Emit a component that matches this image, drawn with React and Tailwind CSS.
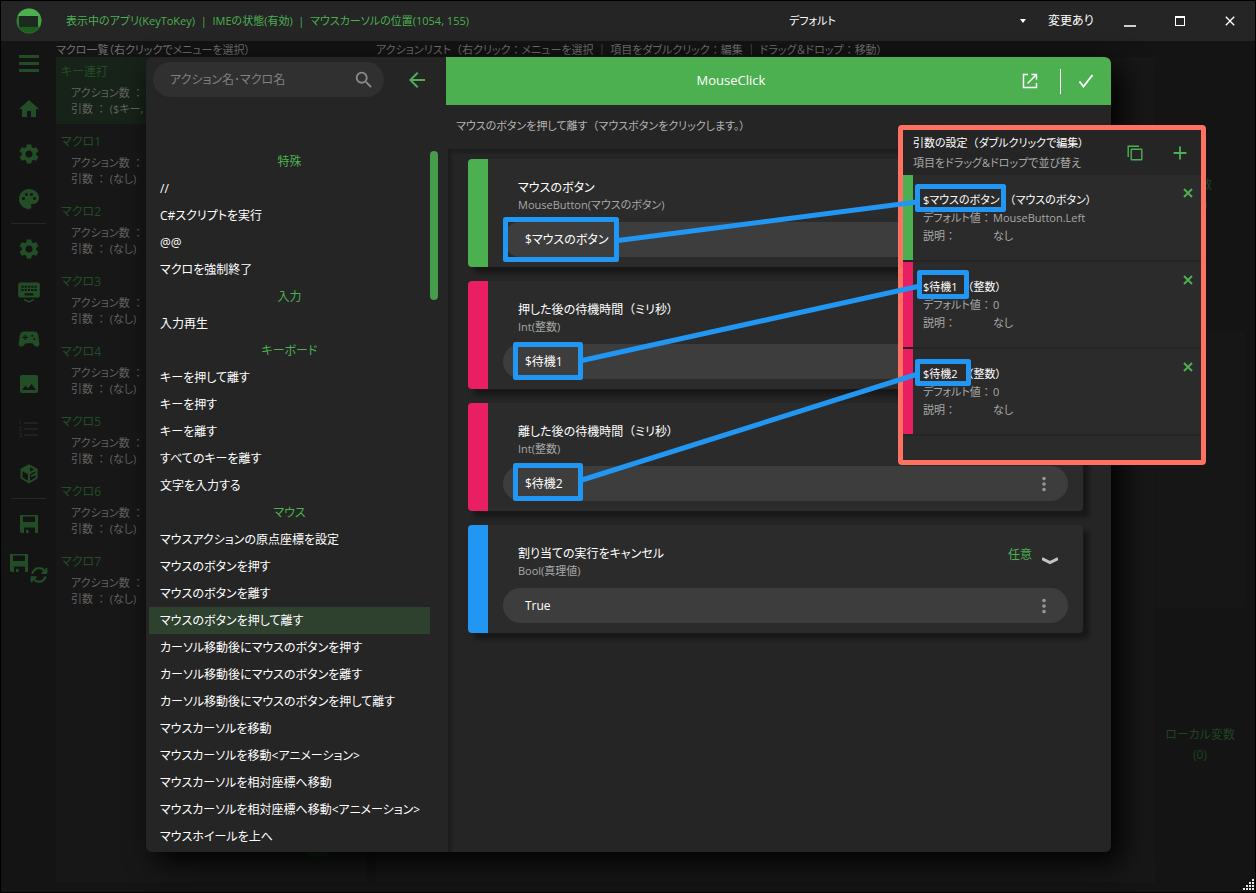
import { FaArrowsRotate } from "react-icons/fa6";
import {
  MdAdd,
  MdArrowBack,
  MdClose,
  MdFormatListNumbered,
  MdHome,
  MdImage,
  MdKeyboard,
  MdMoreVert,
  MdPalette,
  MdSearch,
  MdSettings,
  MdSportsEsports,
} from "react-icons/md";

const macros = [
  { name: "キー連打", args: "($キー,", selected: true },
  { name: "マクロ1", args: "(なし)" },
  { name: "マクロ2", args: "(なし)" },
  { name: "マクロ3", args: "(なし)" },
  { name: "マクロ4", args: "(なし)" },
  { name: "マクロ5", args: "(なし)" },
  { name: "マクロ6", args: "(なし)" },
  { name: "マクロ7", args: "(なし)" },
];

const actionGroups = [
  {
    title: "特殊",
    actions: ["//", "C#スクリプトを実行", "@@", "マクロを強制終了"],
  },
  { title: "入力", actions: ["入力再生"] },
  {
    title: "キーボード",
    actions: [
      "キーを押して離す",
      "キーを押す",
      "キーを離す",
      "すべてのキーを離す",
      "文字を入力する",
    ],
  },
  {
    title: "マウス",
    actions: [
      "マウスアクションの原点座標を設定",
      "マウスのボタンを押す",
      "マウスのボタンを離す",
      "マウスのボタンを押して離す",
      "カーソル移動後にマウスのボタンを押す",
      "カーソル移動後にマウスのボタンを離す",
      "カーソル移動後にマウスのボタンを押して離す",
      "マウスカーソルを移動",
      "マウスカーソルを移動<アニメーション>",
      "マウスカーソルを相対座標へ移動",
      "マウスカーソルを相対座標へ移動<アニメーション>",
      "マウスホイールを上へ",
    ],
  },
];

const params = [
  {
    id: "button",
    title: "マウスのボタン",
    type: "MouseButton(マウスのボタン)",
    value: "$マウスのボタン",
    color: "bg-[#4caf50]",
  },
  {
    id: "wait-down",
    title: "押した後の待機時間（ミリ秒）",
    type: "Int(整数)",
    value: "$待機1",
    color: "bg-[#e91e63]",
  },
  {
    id: "wait-up",
    title: "離した後の待機時間（ミリ秒）",
    type: "Int(整数)",
    value: "$待機2",
    color: "bg-[#e91e63]",
  },
  {
    id: "cancel",
    title: "割り当ての実行をキャンセル",
    type: "Bool(真理値)",
    value: "True",
    color: "bg-[#2196f3]",
    optional: true,
  },
];

const macroArgs = [
  {
    name: "$マウスのボタン",
    type: "（マウスのボタン）",
    value: "MouseButton.Left",
    color: "bg-[#4caf50]",
  },
  { name: "$待機1", type: "（整数）", value: "0", color: "bg-[#e91e63]" },
  { name: "$待機2", type: "（整数）", value: "0", color: "bg-[#e91e63]" },
];

// keeps full-width punctuation at its full width next to proportional kana
function Jp({ text }) {
  return text.split(/([（：])/).map((part, i) =>
    i % 2 ? (
      <span key={i} className="[font-feature-settings:normal]">
        {part}
      </span>
    ) : (
      part
    ),
  );
}

function Logo() {
  return (
    <svg viewBox="0 0 26 26" className="size-[26px]">
      <circle cx="13" cy="13" r="12.5" fill="#2e7d32" />
      <path d="M1.5 8 A12.5 12.5 0 0 1 24.5 8 Z" fill="#4caf50" />
      <path d="M2.5 19 H23.5 A12.5 12.5 0 0 1 2.5 19 Z" fill="#1b5e20" />
      <path d="M22 8 H24.5 A12.5 12.5 0 0 1 23.5 19 L22 17 Z" fill="#43a047" />
      <rect x="3" y="8" width="19" height="11" rx="1" fill="#1d2a1e" />
    </svg>
  );
}

function FloppyIcon({ className }) {
  return (
    <svg viewBox="0 0 18 18" className={className} fill="currentColor">
      <path
        fillRule="evenodd"
        d="M0 0H18V18H15V12.5H4V18H1.5L0 16.5ZM3 1.5V7H15V1.5Z"
      />
      <path d="M6 15H8.5V18H6Z" />
    </svg>
  );
}

function BoxIcon() {
  return (
    <svg
      viewBox="0 0 20 20"
      className="size-5"
      fill="none"
      stroke="currentColor"
      strokeWidth="2"
      strokeLinejoin="round"
    >
      <path d="M10 1.5 L17.5 5.5 V14 L10 18.5 L2.5 14 V5.5 Z" />
      <path d="M2.5 5.5 L10 9.5 V18" />
      <path d="M10 9.5 L17.5 5.5 M10 1.5 V9 M12 12.5 L17 9.5" />
      <path d="M10 1.5 L2.5 5.5 L10 9.5 Z" fill="currentColor" stroke="none" />
    </svg>
  );
}

function OpenIcon() {
  return (
    <svg
      viewBox="0 0 16 16"
      className="size-4"
      fill="none"
      stroke="currentColor"
      strokeWidth="1.5"
    >
      <path d="M6 1.5H1.5V14.5H14.5V10" />
      <path d="M9.5 1.5H14.5V6.5M14 2L5.5 10.5" />
    </svg>
  );
}

function CheckIcon() {
  return (
    <svg
      viewBox="0 0 16 16"
      className="size-4"
      fill="none"
      stroke="currentColor"
      strokeWidth="2"
    >
      <path d="M1.5 8.5L5.5 13.5L14.5 2" />
    </svg>
  );
}

function CopyIcon() {
  return (
    <svg
      viewBox="0 0 16 16"
      className="size-4"
      fill="none"
      stroke="currentColor"
      strokeWidth="1.4"
    >
      <path d="M1.2 12V1.2H12" />
      <rect x="4.2" y="4.2" width="10.6" height="10.6" rx="0.5" />
    </svg>
  );
}

function SideButton({ label, children, className = "text-[#234d26]" }) {
  return (
    <button
      type="button"
      aria-label={label}
      className={`flex h-[45px] w-full items-center justify-center ${className}`}
    >
      {children}
    </button>
  );
}

function SideSeparator() {
  return (
    <div className="flex h-[5px] w-full items-center px-[10px]">
      <div className="h-px w-full bg-[#262626]" />
    </div>
  );
}

function Sidebar() {
  return (
    <nav className="w-[55px] shrink-0">
      <SideButton label="メニュー">
        <svg viewBox="0 0 20 17" className="h-[17px] w-5" fill="currentColor">
          <path d="M0 0H20V3H0ZM0 7H20V10H0ZM0 14H20V17H0Z" />
        </svg>
      </SideButton>
      <SideButton label="ホーム">
        <MdHome className="size-6" />
      </SideButton>
      <SideButton label="設定">
        <MdSettings className="size-6" />
      </SideButton>
      <SideButton label="テーマ">
        <MdPalette className="size-6" />
      </SideButton>
      <SideSeparator />
      <SideButton label="詳細設定">
        <MdSettings className="size-6" />
      </SideButton>
      <SideButton label="キーボード">
        <span className="flex flex-col items-center pb-2">
          <MdKeyboard className="size-[26px]" />
          <svg
            viewBox="0 0 10 4"
            className="-mt-1 h-1 w-[10px]"
            fill="none"
            stroke="currentColor"
            strokeWidth="1.5"
          >
            <path d="M0 0.5L5 3L10 0.5" />
          </svg>
        </span>
      </SideButton>
      <SideButton label="ゲームパッド">
        <MdSportsEsports className="size-[26px]" />
      </SideButton>
      <SideButton label="画像">
        <MdImage className="size-6" />
      </SideButton>
      <SideButton label="番号リスト" className="text-[#202220]">
        <MdFormatListNumbered className="size-6" />
      </SideButton>
      <SideButton label="パッケージ">
        <BoxIcon />
      </SideButton>
      <SideSeparator />
      <SideButton label="保存">
        <FloppyIcon className="size-[18px]" />
      </SideButton>
      <SideButton label="保存して更新">
        <span className="flex items-center gap-[2px]">
          <FloppyIcon className="mb-3 size-[18px]" />
          <FaArrowsRotate className="mt-3 size-[18px]" />
        </span>
      </SideButton>
    </nav>
  );
}

function TitleBar() {
  return (
    <header className="flex h-10 shrink-0 items-center bg-[#252525] text-xs">
      <div className="flex flex-1 items-center gap-6 pl-[15px]">
        <Logo />
        <p className="text-[11px] whitespace-nowrap text-[#4caf50]">
          表示中のアプリ(KeyToKey)&nbsp; |&nbsp; IMEの状態(有効)&nbsp; |&nbsp;
          マウスカーソルの位置(1054, 155)
        </p>
      </div>
      <div className="flex w-60 items-center">
        <select
          aria-label="プロファイル"
          className="flex-1 appearance-none bg-transparent text-[11px] text-white outline-none"
        >
          <option>デフォルト</option>
        </select>
        <svg viewBox="0 0 6 4" className="mr-[3px] h-1 w-[6px]" fill="#fff">
          <path d="M0 0H6L3 4Z" />
        </svg>
      </div>
      <span className="w-[76px] pl-[19px] whitespace-nowrap text-white">
        変更あり
      </span>
      <button
        type="button"
        aria-label="最小化"
        className="flex h-full w-[50px] items-center justify-center"
      >
        <span className="mt-[10px] h-[2px] w-3 bg-[#cfcfcf]" />
      </button>
      <button
        type="button"
        aria-label="最大化"
        className="flex h-full w-[50px] items-center justify-center"
      >
        <span className="size-[10px] border border-t-2 border-white" />
      </button>
      <button
        type="button"
        aria-label="閉じる"
        className="flex h-full w-[50px] items-center justify-center text-white"
      >
        <MdClose className="size-4" />
      </button>
    </header>
  );
}

function MacroList() {
  return (
    <div className="relative h-full bg-[#171717]">
      <ul>
        {macros.map((macro) => (
          <li
            key={macro.name}
            className={`mb-[3px] h-[67px] pt-[5px] pl-[5px] text-xs ${
              macro.selected ? "bg-[#172218]" : ""
            }`}
          >
            <p className="leading-5 text-[#234d26]">{macro.name}</p>
            <div className="pt-[3px] pl-[10px] text-[11px] leading-4 text-[#626262]">
              <p>
                <Jp text="アクション数 ：" />
              </p>
              <p>
                <Jp text={`引数 ： ${macro.args}`} />
              </p>
            </div>
          </li>
        ))}
      </ul>
      {/* add button, mostly under the dialog */}
      <button
        type="button"
        aria-label="マクロを追加"
        className="absolute right-[26px] bottom-[25px] size-[44px] rounded-full bg-[#123314]"
      />
    </div>
  );
}

function Background() {
  return (
    <div className="flex min-h-0 flex-1">
      <Sidebar />
      <div className="flex min-w-0 flex-1 flex-col pb-[10px]">
        <div className="flex h-4 shrink-0 text-[11px] leading-[17px] whitespace-nowrap text-[#717171]">
          <p className="w-80 shrink-0">
            マクロ一覧（右クリックでメニューを選択）
          </p>
          <p>
            <Jp text="アクションリスト（右クリック：メニューを選択 ｜ 項目をダブルクリック：編集 ｜ ドラッグ＆ドロップ：移動）" />
          </p>
        </div>
        <div className="flex min-h-0 flex-1">
          <div className="mr-[10px] w-[310px] shrink-0">
            <MacroList />
          </div>
          <div className="flex-1 bg-[#171717]" />
          <div className="mr-[10px] flex w-[90px] flex-col text-center text-xs leading-5 text-[#1f4422]">
            <div className="flex flex-1 flex-col justify-center">
              <p>変数</p>
              <p>(0)</p>
            </div>
            <div className="flex-1 bg-[#161616]" />
            <div className="flex flex-1 flex-col justify-center">
              <p>ローカル変数</p>
              <p>(0)</p>
            </div>
          </div>
        </div>
      </div>
    </div>
  );
}

function ActionPicker() {
  return (
    <aside className="flex w-[300px] shrink-0 flex-col">
      <div className="flex h-[91px] shrink-0 items-start pt-[5px] pl-[7px]">
        <label className="flex h-[35px] w-[231px] items-center rounded-full bg-[#303030] pr-[9px] pl-[17px]">
          <input
            type="text"
            aria-label="検索"
            placeholder="アクション名･マクロ名"
            className="min-w-0 flex-1 bg-transparent text-xs text-white outline-none placeholder:text-[#808080]"
          />
          <MdSearch className="size-[22px] text-[#8a8a8a]" />
        </label>
        <button
          type="button"
          aria-label="戻る"
          className="flex h-[35px] flex-1 items-center justify-center pl-1 text-[#4caf50]"
        >
          <MdArrowBack className="size-6" />
        </button>
      </div>
      <div className="flex min-h-0 flex-1 overflow-hidden pl-[3px]">
        <div className="w-[281px] text-xs">
          {actionGroups.map((group) => (
            <section key={group.title}>
              <h3 className="text-center leading-[27px] text-[#4caf50]">
                {group.title}
              </h3>
              <ul>
                {group.actions.map((action) => (
                  <li key={action}>
                    <button
                      type="button"
                      className={`block w-full pl-[11px] text-left leading-[27px] whitespace-nowrap text-white ${
                        action === "マウスのボタンを押して離す"
                          ? "bg-[#2e402e]"
                          : ""
                      }`}
                    >
                      {action}
                    </button>
                  </li>
                ))}
              </ul>
            </section>
          ))}
        </div>
        <div className="mt-[3px] h-[149px] w-2 rounded-full bg-[#479c4a]" />
      </div>
    </aside>
  );
}

function ParamCard({ param }) {
  return (
    <div className="flex rounded bg-[#2b2b2b] shadow-[6px_6px_4px_#181818]">
      <div className={`w-5 shrink-0 rounded-l ${param.color}`} />
      <div className="flex-1 px-[15px] pt-5 pb-[10px]">
        <div className="flex items-start pr-[10px] pl-[15px]">
          <label htmlFor={param.id} className="flex-1">
            <span className="block text-xs leading-[18px] text-white">
              <Jp text={param.title} />
            </span>
            <span className="block text-[11px] leading-4 text-[#a8a8a8]">
              {param.type}
            </span>
          </label>
          {param.optional && (
            <div className="flex items-center gap-[10px] text-xs leading-[18px] text-[#4caf50]">
              任意
              <svg
                viewBox="0 0 16 8"
                className="mt-3 h-2 w-4"
                fill="none"
                stroke="#c4c4c4"
                strokeWidth="3"
              >
                <path d="M0 1.5L8 5.5L16 1.5" />
              </svg>
            </div>
          )}
        </div>
        <div className="mt-[9px] flex h-[35px] items-center rounded-full bg-[#3d3d3d] pr-[13px] pl-[22px]">
          <input
            id={param.id}
            type="text"
            defaultValue={param.value}
            className="min-w-0 flex-1 bg-transparent text-xs text-white outline-none"
          />
          <button type="button" aria-label="その他">
            <MdMoreVert className="size-[22px] text-[#959595]" />
          </button>
        </div>
      </div>
    </div>
  );
}

function ActionEditor() {
  return (
    <main className="flex min-w-0 flex-1 flex-col">
      <div className="flex h-12 shrink-0 items-center rounded-tr-md bg-[#4caf50] text-white">
        <h2 className="flex-1 pl-4 text-center text-[13px]">MouseClick</h2>
        <button
          type="button"
          aria-label="別ウィンドウで開く"
          className="flex h-full w-[60px] items-center justify-center"
        >
          <OpenIcon />
        </button>
        <div className="h-[25px] w-px bg-white" />
        <button
          type="button"
          aria-label="確定"
          className="flex h-full w-[50px] items-center justify-center"
        >
          <CheckIcon />
        </button>
      </div>
      <p className="h-11 shrink-0 pl-[10px] text-[11px] leading-[42px] text-[#b4b4b4]">
        <Jp text="マウスのボタンを押して離す（マウスボタンをクリックします。）" />
      </p>
      <div className="ml-[2px] flex flex-1 flex-col gap-[14px] py-[10px] pr-7 pl-5 shadow-[inset_3px_3px_3px_#1c1c1c]">
        {params.map((param) => (
          <ParamCard key={param.id} param={param} />
        ))}
      </div>
    </main>
  );
}

function ArgsPopup() {
  return (
    <section className="absolute top-[124px] left-[897px] w-[308px] rounded border-[5px] border-[#ff7261] bg-[#252525] text-[11px]">
      <div className="flex h-[45px] items-center px-[10px]">
        <div className="flex-1">
          <h2 className="leading-5 whitespace-nowrap text-white">
            <Jp text="引数の設定（ダブルクリックで編集）" />
          </h2>
          <p className="leading-5 whitespace-nowrap text-[#a8a8a8]">
            項目をドラッグ&amp;ドロップで並び替え
          </p>
        </div>
        <div className="flex items-center gap-[26px] text-[#4caf50]">
          <button type="button" aria-label="コピー">
            <CopyIcon />
          </button>
          <button type="button" aria-label="追加">
            <MdAdd className="size-[22px]" />
          </button>
        </div>
      </div>
      <ul>
        {macroArgs.map((arg) => (
          <li
            key={arg.name}
            className="mb-[2px] flex h-[85px] bg-[#2b2b2b] pr-[5px]"
          >
            <div className={`w-[10px] shrink-0 ${arg.color}`} />
            <div className="flex-1 pt-[15px] pl-[10px] whitespace-nowrap">
              <p className="flex gap-[5px] leading-[19px] text-white">
                <span>{arg.name}</span>
                <span>
                  <Jp text={arg.type} />
                </span>
              </p>
              <dl className="grid grid-cols-[70px_1fr] leading-[18px] text-[#a8a8a8]">
                <dt>
                  <Jp text="デフォルト値：" />
                </dt>
                <dd>{arg.value}</dd>
                <dt>
                  <Jp text="説明：" />
                </dt>
                <dd>なし</dd>
              </dl>
            </div>
            <button
              type="button"
              aria-label={`${arg.name}を削除`}
              className="mt-[10px] flex size-4 items-center justify-center text-[#4caf50]"
            >
              <svg
                viewBox="0 0 10 10"
                className="size-[10px]"
                stroke="currentColor"
                strokeWidth="2"
              >
                <path d="M1 1L9 9M9 1L1 9" />
              </svg>
            </button>
          </li>
        ))}
      </ul>
      <div className="h-6 bg-[#2b2b2b]" />
    </section>
  );
}

// marker boxes and the lines that tie each value to its argument
function Annotations() {
  return (
    <svg
      className="pointer-events-none absolute inset-0 h-full w-full"
      fill="none"
      stroke="#2196f3"
      strokeWidth="5"
      strokeLinejoin="round"
    >
      <rect x="504.5" y="218.5" width="111" height="40" />
      <rect x="514.5" y="343.5" width="65" height="33" />
      <rect x="514.5" y="464.5" width="65" height="33" />
      <rect x="916.5" y="185.5" width="86" height="23" />
      <rect x="918.5" y="271.5" width="47" height="24" />
      <rect x="916.5" y="360.5" width="51" height="22" />
      <path d="M617 239.5L916 201M581 359.5L919 285M581 479L917 373" />
    </svg>
  );
}

function ResizeGrip() {
  const dots = [
    [9, 0],
    [6, 3],
    [9, 3],
    [3, 6],
    [6, 6],
    [9, 6],
    [0, 9],
    [3, 9],
    [6, 9],
    [9, 9],
  ];
  return (
    <svg
      viewBox="0 0 11 11"
      className="absolute right-px bottom-[2px] size-[11px]"
      fill="#e8e8e8"
    >
      {dots.map(([x, y]) => (
        <rect key={`${x}-${y}`} x={x} y={y} width="2" height="2" />
      ))}
    </svg>
  );
}

export default function App() {
  return (
    <div className="relative flex h-screen flex-col overflow-hidden border border-black bg-[#141414] font-['Open_Sans','Noto_Sans_CJK_JP',sans-serif] [font-feature-settings:'palt']">
      <TitleBar />
      <Background />
      <div
        role="dialog"
        aria-label="MouseClick"
        className="absolute top-14 right-36 bottom-10 left-[145px] flex overflow-hidden rounded-md bg-[#252525] shadow-[10px_10px_30px_#000]"
      >
        <ActionPicker />
        <ActionEditor />
      </div>
      <ArgsPopup />
      <Annotations />
      <ResizeGrip />
    </div>
  );
}
